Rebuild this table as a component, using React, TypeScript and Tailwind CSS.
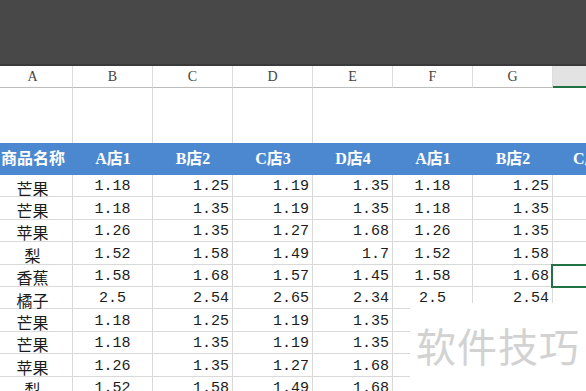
import React from "react";

type Align = "c" | "r";

const cols = ["A", "B", "C", "D", "E", "F", "G", "H"];
const headers = ["商品名称", "A店1", "B店2", "C店3", "D店4", "A店1", "B店2", "C店3"];
const aligns: Align[] = ["c", "c", "r", "r", "r", "c", "r", "r"];

const rows: string[][] = [
  ["芒果", "1.18", "1.25", "1.19", "1.35", "1.18", "1.25", ""],
  ["芒果", "1.18", "1.35", "1.19", "1.35", "1.18", "1.35", ""],
  ["苹果", "1.26", "1.35", "1.27", "1.68", "1.26", "1.35", ""],
  ["梨", "1.52", "1.58", "1.49", "1.7", "1.52", "1.58", ""],
  ["香蕉", "1.58", "1.68", "1.57", "1.45", "1.58", "1.68", ""],
  ["橘子", "2.5", "2.54", "2.65", "2.34", "2.5", "2.54", ""],
  ["芒果", "1.18", "1.25", "1.19", "1.35", "", "", ""],
  ["芒果", "1.18", "1.35", "1.19", "1.35", "", "", ""],
  ["苹果", "1.26", "1.35", "1.27", "1.68", "", "", ""],
  ["梨", "1.52", "1.58", "1.49", "1.68", "", "", ""],
];

const grid = "grid grid-cols-[80px_80px_80px_80px_80px_80px_80px_80px]";

function App() {
  return (
    <div className="relative w-[586px] h-[391px] overflow-hidden bg-white">
      {/* toolbar area */}
      <div className="h-[66px] bg-[#484848] border-b-2 border-[#3a3a3a]" />

      <div className="ml-[-7px] w-[640px]">
        {/* column letters */}
        <div className={grid}>
          {cols.map((c, i) => (
            <div
              key={c}
              className={
                i === 7
                  ? "h-[22px] bg-[#e3e3e3] border-b-2 border-[#217346]"
                  : "h-[22px] flex items-center justify-center border-r border-b border-r-[#dcdcdc] border-b-[#bcbcbc] text-[14px] text-[#444] font-['Liberation_Serif',serif]"
              }
            >
              {i === 7 ? "" : c}
            </div>
          ))}
        </div>

        {/* blank title row */}
        <div className={grid}>
          {cols.map((c, i) => (
            <div
              key={c}
              className={i < 4 ? "h-[55px] border-r border-[#d9d9d9]" : "h-[55px]"}
            />
          ))}
        </div>

        {/* blue header */}
        <div className={grid + " bg-[#4c88d0]"}>
          {headers.map((h, i) => (
            <div
              key={i}
              className={
                "h-[32px] flex items-center text-white font-bold text-[16px] font-['Liberation_Serif','Noto_Sans_CJK_SC',serif] " +
                (i === 7 ? "justify-start pl-[20px]" : "justify-center")
              }
            >
              {h}
            </div>
          ))}
        </div>

        {/* data */}
        {rows.map((r, ri) => (
          <div key={ri} className={grid}>
            {r.map((v, ci) => (
              <div
                key={ci}
                className={
                  "h-[22.4px] flex items-center pt-[4px] border-r border-b border-[#d9d9d9] text-[#1c1c1c] " +
                  (ci === 0
                    ? "justify-center text-[16px] font-['Noto_Sans_CJK_SC',sans-serif] "
                    : "text-[15px] font-['Liberation_Mono',monospace] ") +
                  (aligns[ci] === "r" && ci !== 0 ? "justify-end pr-[3px]" : "justify-center")
                }
              >
                {v}
              </div>
            ))}
          </div>
        ))}
      </div>

      {/* selected cell */}
      <div className="absolute left-[551px] top-[264px] w-[40px] h-[24px] border-2 border-[#217346]" />

      {/* watermark */}
      <div className="absolute left-[410px] top-[303px] w-[176px] h-[88px] bg-white flex items-center justify-center">
        <span className="text-[40px] text-[#d2d2d2] font-['Noto_Sans_CJK_SC',sans-serif] tracking-[1px] mt-[-4px]">
          软件技巧
        </span>
      </div>
    </div>
  );
}

export default App;
